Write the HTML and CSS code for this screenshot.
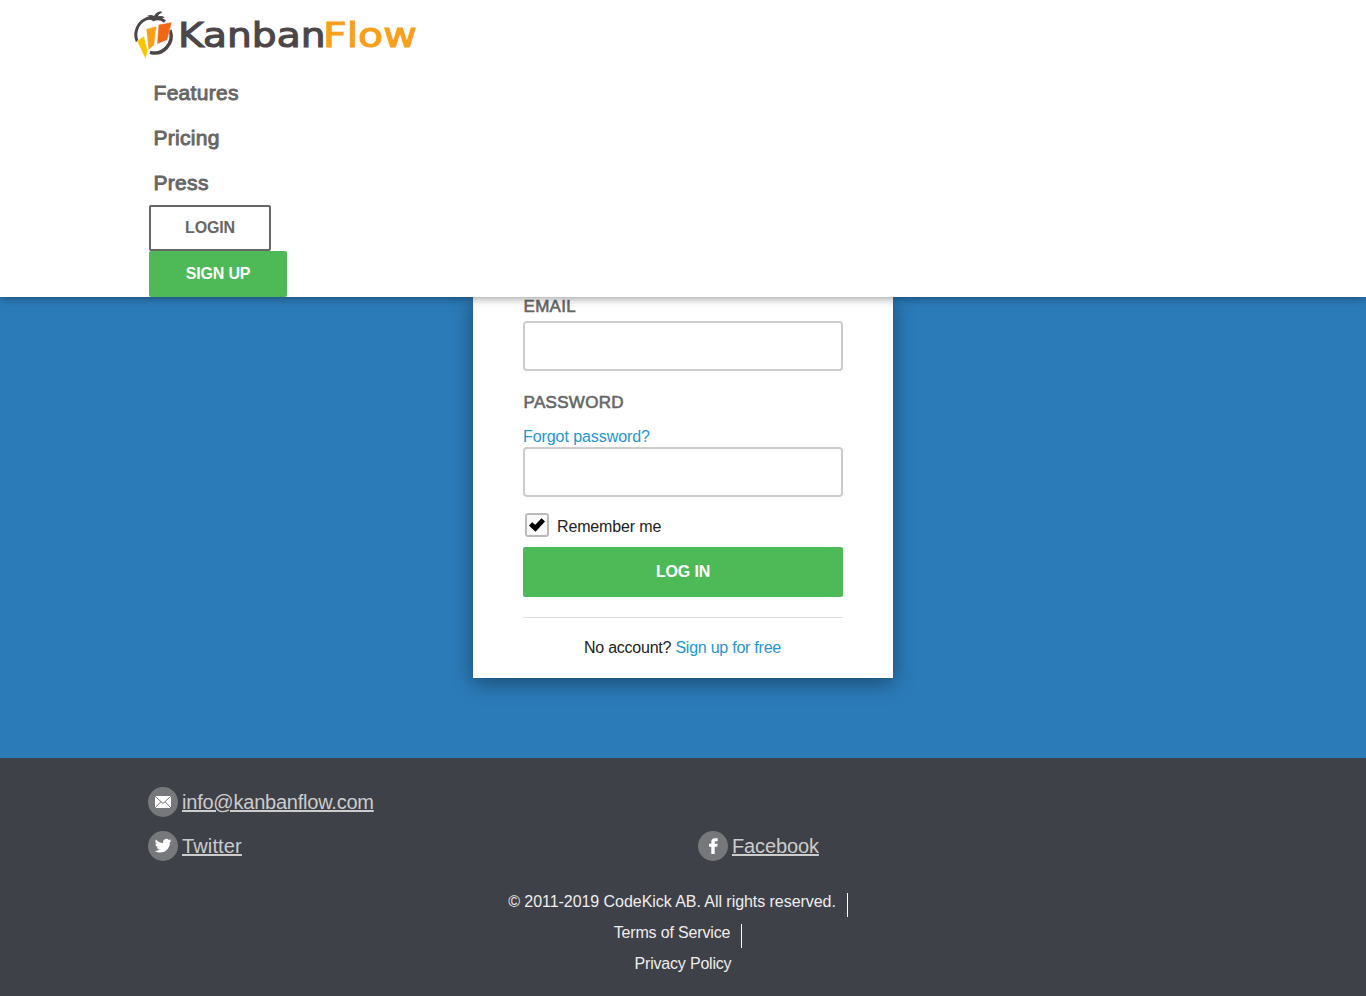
FILE: index.html
```html
<!DOCTYPE html>
<html lang="en">
<head>
<meta charset="utf-8">
<title>KanbanFlow - Login</title>
<link rel="stylesheet" href="styles.css">
</head>
<body>
<header class="header">
  <a class="logo">
    <svg width="290" height="52" viewBox="0 0 290 52" role="img" aria-label="KanbanFlow">
      <path d="M4.200 31.500A16.500 17 0 0 1 12 9.500Q16 7.300 20.500 9.300Q27 7.300 32 11.500" fill="none" stroke="#4c4648" stroke-width="3"/>
      <path d="M37 20A16.500 17 0 0 1 17 42.300" fill="none" stroke="#4c4648" stroke-width="3.400"/>
      <path d="M14 6Q18 3.800 21 6Q23 2 28 1.300L29 2.600Q25.500 4 24.800 6.300Q28 5.300 32 7.300Q27 9.800 23.500 9L20.500 11.500L18.500 9Q17 6.500 14 6Z" fill="#4c4648"/>
      <path d="M4 31L11 26L14.800 41L12.500 49Z" fill="#fdc500" stroke="#fff" stroke-width=".4"/>
      <path d="M13.200 19L23.500 16L21.300 35L15.500 40Z" fill="#f9a01b" stroke="#fff" stroke-width=".4"/>
      <path d="M25.500 14.500L38.800 12.300L34.300 30L24 34.300Z" fill="#f26716" stroke="#fff" stroke-width=".4"/>
      <text class="wordmark dark" x="45" y="37" textLength="147.500" lengthAdjust="spacingAndGlyphs">Kanban</text>
      <text class="wordmark amber" x="190" y="37" textLength="94" lengthAdjust="spacingAndGlyphs">Flow</text>
    </svg>
  </a>
  <nav class="nav">
    <a class="nav-link">Features</a>
    <a class="nav-link">Pricing</a>
    <a class="nav-link">Press</a>
    <a class="btn btn-outline">LOGIN</a>
    <a class="btn btn-signup">SIGN UP</a>
  </nav>
</header>
<main class="main">
  <form class="card">
    <label class="label" for="email">EMAIL</label>
    <input class="field" id="email" type="text">
    <label class="label label-password" for="password">PASSWORD</label>
    <a class="link forgot">Forgot password?</a>
    <input class="field" id="password" type="password">
    <div class="remember">
      <span class="checkbox"><svg width="16" height="14" viewBox="0 0 16 14"><path d="M0 7.500L3.200 4.200L6.300 6.800L12.500 .3L16 3.500L6.500 13.700Z" fill="#000"/></svg></span>
      <span>Remember me</span>
    </div>
    <button class="submit" type="button">LOG IN</button>
    <p class="signup">No account? <a class="link">Sign up for free</a></p>
  </form>
</main>
<footer class="footer">
  <div class="contacts">
    <a class="contact wide"><svg class="badge" viewBox="0 0 30 30"><circle cx="15" cy="15" r="15" fill="#77787b"/><rect x="7" y="9" width="16" height="12" fill="#fff"/><path d="M7 9.200L15 16.500L23 9.200M7 21L13 14.700M23 21L17 14.700" fill="none" stroke="#77787b" stroke-width="1"/></svg><span class="mail">info@kanbanflow.com</span></a>
    <a class="contact"><svg class="badge" viewBox="0 0 30 30"><circle cx="15" cy="15" r="15" fill="#77787b"/><path transform="translate(6.800 6.300) scale(.7)" d="M23.950 4.570a10 10 0 0 1-2.820.77 4.960 4.960 0 0 0 2.160-2.720 9.900 9.900 0 0 1-3.120 1.180 4.920 4.920 0 0 0-8.380 4.480C7.690 8.100 4.070 6.130 1.640 3.160a4.920 4.920 0 0 0 1.520 6.570 4.900 4.900 0 0 1-2.230-.61v.06a4.920 4.920 0 0 0 3.950 4.830 5 5 0 0 1-2.210.08 4.940 4.940 0 0 0 4.600 3.420A9.870 9.870 0 0 1 0 19.540a14 14 0 0 0 7.550 2.210c9.050 0 14-7.500 14-13.980 0-.21 0-.42-.02-.63a9.940 9.940 0 0 0 2.460-2.550z" fill="#fff"/></svg><span class="twitter">Twitter</span></a>
    <a class="contact"><svg class="badge" viewBox="0 0 30 30"><circle cx="15" cy="15" r="15" fill="#77787b"/><path d="M13.300 23V15.800H11V12.700H13.300V10.800Q13.300 7.200 16.800 7.200H19.700V10.200H17.800Q16.700 10.200 16.700 11.300V12.700H19.700L19.300 15.800H16.700V23Z" fill="#fff"/></svg><span class="facebook">Facebook</span></a>
  </div>
  <div class="legal">
    <span class="legal-item divided">© 2011-2019 CodeKick AB. All rights reserved.</span>
    <span class="legal-item divided terms">Terms of Service</span>
    <span class="legal-item privacy">Privacy Policy</span>
  </div>
</footer>
</body>
</html>
```
FILE: styles.css
```css
* { box-sizing: border-box; }
body {
  margin: 0;
  font: 16px/24px "Liberation Sans", Arial, sans-serif;
  color: #222;
  background: #3f4148;
}
.header {
  position: relative;
  z-index: 1;
  height: 297px;
  padding: 10px 0 0 133px;
  background: #fff;
  box-shadow: 0 0 10px rgba(0, 0, 0, .5);
}
.logo { display: block; height: 60px; }
.logo svg { display: block; }
.wordmark { font: 34px "DejaVu Sans", sans-serif; stroke-width: 1.1; }
.dark { fill: #4c4648; stroke: #4c4648; }
.amber { fill: #f9a01b; stroke: #f9a01b; }
.nav {
  display: flex;
  flex-direction: column;
  align-items: flex-start;
  padding-left: 16px;
}
.nav-link {
  height: 45px;
  padding-left: 4.500px;
  font-size: 21px;
  line-height: 46px;
  letter-spacing: .3px;
  color: #666;
  -webkit-text-stroke: .9px #666;
}
.btn {
  height: 46px;
  border-radius: 2px;
  font-weight: bold;
  line-height: 46px;
  letter-spacing: -.15px;
  text-align: center;
}
.btn-outline { width: 122px; border: 2px solid #666; line-height: 42px; color: #666; }
.btn-signup { width: 138px; background: #4eb957; color: #fff; }
.main { height: 461px; background: #2b7bb9; }
.card {
  width: 420px;
  height: 381px;
  margin: 0 auto;
  padding: 0 50px;
  background: #fff;
  box-shadow: 0 5px 20px rgba(0, 0, 0, .4);
}
.label {
  display: block;
  height: 24px;
  padding-left: .5px;
  font-size: 17px;
  line-height: 20px;
  letter-spacing: .3px;
  color: #666;
  -webkit-text-stroke: .6px #666;
}
.label-password { height: 54px; padding-top: 22px; }
.forgot { display: block; height: 22px; line-height: 24px; letter-spacing: -.07px; }
.link { color: #1e96d0; }
.field {
  display: block;
  width: 320px;
  height: 50px;
  padding: 0 10px;
  border: 2px solid #ccc;
  border-radius: 4px;
  background: #fff;
}
.remember {
  display: flex;
  gap: 8px;
  height: 50px;
  padding: 16px 0 0 2px;
  line-height: 27px;
  letter-spacing: -.15px;
}
.checkbox {
  display: flex;
  align-items: center;
  justify-content: center;
  width: 24px;
  height: 24px;
  border: 2px solid #bbb;
  border-radius: 3px;
  background: #fafafa;
}
.submit {
  display: block;
  width: 320px;
  height: 50px;
  padding: 0;
  border: 0;
  border-radius: 2px;
  background: #4eb957;
  color: #fff;
  font: bold 16px "Liberation Sans", Arial, sans-serif;
  letter-spacing: -.15px;
}
.signup {
  margin: 20px 0 0;
  padding: 18px 1px 0 0;
  border-top: 1px solid #ddd;
  text-align: center;
  letter-spacing: -.24px;
}
.footer { height: 238px; padding: 29px 133px 0 148px; }
.contacts { display: grid; grid-template-columns: 550px 1fr; row-gap: 14px; }
.contact {
  display: flex;
  align-items: center;
  gap: 4px;
  height: 30px;
  color: #ccc;
  font-size: 20px;
  text-decoration: underline;
}
.wide { grid-column: 1 / -1; }
.mail { letter-spacing: -.22px; }
.twitter { letter-spacing: .14px; }
.facebook { letter-spacing: -.12px; }
.badge { width: 30px; height: 30px; }
.legal {
  display: flex;
  flex-direction: column;
  align-items: center;
  gap: 7px;
  margin: 32px -133px 0 -148px;
  color: #eee;
}
.legal-item { height: 24px; line-height: 17px; letter-spacing: -.05px; }
.terms { letter-spacing: -.15px; }
.privacy { letter-spacing: -.2px; }
.divided { margin-right: 10px; padding-right: 11px; border-right: 1px solid #fff; }
```
